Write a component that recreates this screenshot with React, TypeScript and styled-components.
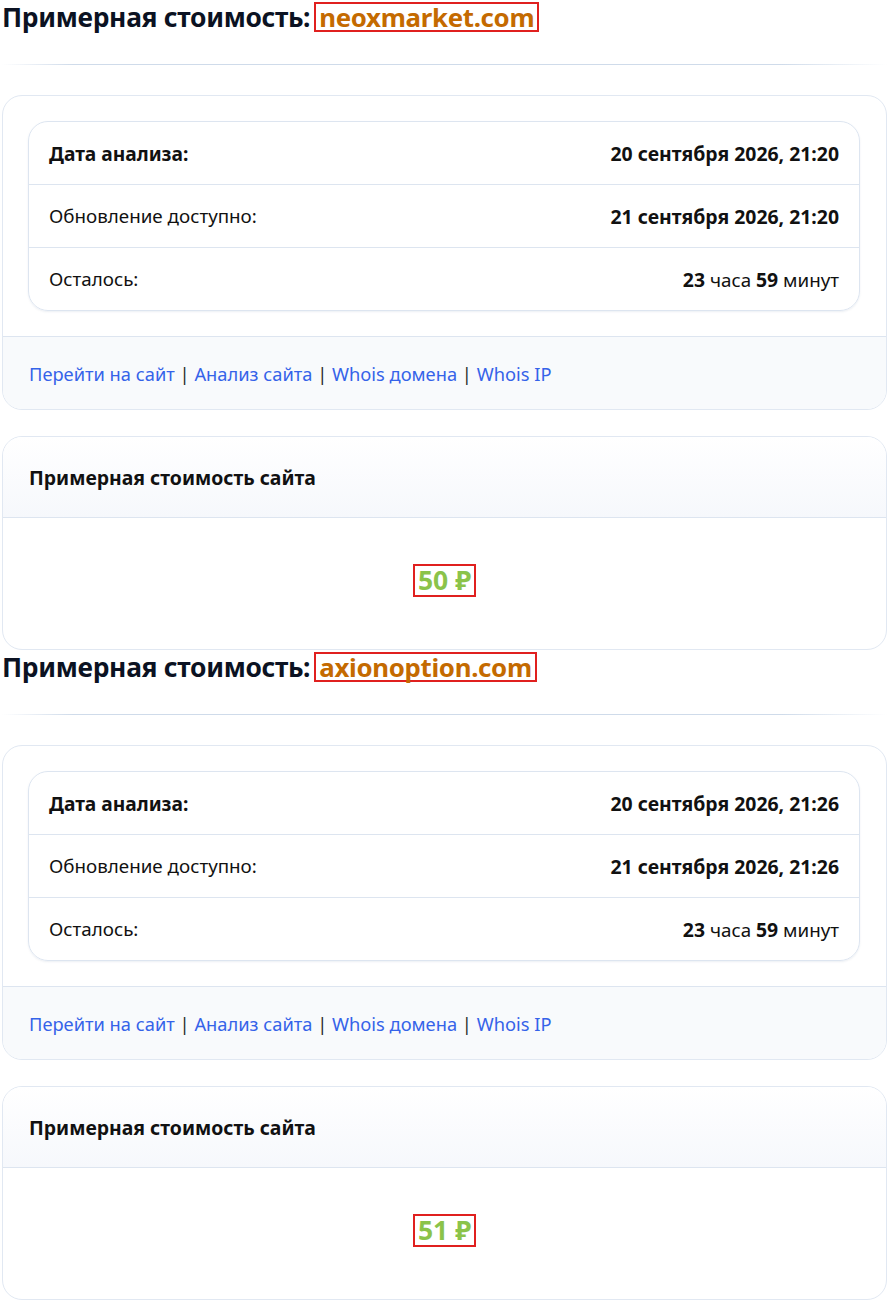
import React from "react";
import styled, { createGlobalStyle } from "styled-components";

const GlobalStyle = createGlobalStyle`
  html, body {
    margin: 0;
    padding: 0;
    background: #ffffff;
  }
  body {
    font-family: "Noto Sans", "Open Sans", "DejaVu Sans", sans-serif;
    color: #111111;
  }
`;

const Page = styled.div`
  width: 890px;
  display: flex;
  flex-direction: column;
`;

const Block = styled.section`
  padding: 0 3px 0 2px;
  display: flex;
  flex-direction: column;
`;

const Title = styled.h2`
  margin: 0;
  height: 33px;
  display: flex;
  align-items: center;
  gap: 4px;
  font-size: 26.4px;
  font-weight: 700;
  color: #0b1222;
  letter-spacing: -0.3px;
  white-space: nowrap;
`;

const Domain = styled.span`
  color: #c46a00;
  border: 2px solid #e0201f;
  padding: 0 3px;
  font-size: 25.8px;
  line-height: 26px;
`;

const Divider = styled.hr`
  margin: 31px 0 30px;
  height: 1px;
  border: 0;
  background: linear-gradient(90deg, rgba(203, 213, 230, 0) 0%, #cfdbea 8%, #cfdbea 88%, rgba(203, 213, 230, 0) 100%);
`;

const Card = styled.div<{ $gap?: number }>`
  border: 1px solid #e1e8f2;
  border-radius: 20px;
  overflow: hidden;
  background: #ffffff;
  margin-top: ${(p) => p.$gap ?? 0}px;
`;

const CardBody = styled.div`
  padding: 25px 26px 25px 25px;
`;

const Table = styled.div`
  border: 1px solid #dde5f0;
  border-radius: 20px;
  overflow: hidden;
  box-shadow: 0 1px 2px rgba(100, 120, 160, 0.12);
`;

const Row = styled.div`
  height: 62px;
  padding: 0 20px;
  display: flex;
  align-items: center;
  justify-content: space-between;
  font-size: 18.8px;
  color: #111111;
  white-space: nowrap;
  & + & {
    border-top: 1px solid #dde5f0;
  }
`;

const Label = styled.span<{ $bold?: boolean }>`
  font-weight: ${(p) => (p.$bold ? 700 : 400)};
  font-size: ${(p) => (p.$bold ? "19.2px" : "inherit")};
`;

const Value = styled.span`
  b {
    font-weight: 700;
    font-size: 19.4px;
  }
`;

const Footer = styled.div`
  border-top: 1px solid #dde5f0;
  background: #f8fafc;
  height: 72px;
  padding: 0 26px;
  display: flex;
  align-items: center;
  font-size: 18.3px;
  color: #1b1b1b;
  white-space: pre;
`;

const Link = styled.a`
  color: #3563e9;
  text-decoration: none;
`;

const Sep = styled.span`
  color: #2a2a2a;
`;

const CardHeader = styled.div`
  height: 80px;
  padding: 0 26px;
  display: flex;
  align-items: center;
  border-bottom: 1px solid #dde5f0;
  background: linear-gradient(180deg, #ffffff 0%, #f6f8fc 100%);
  font-size: 19.4px;
  font-weight: 700;
  color: #111111;
`;

const PriceBody = styled.div`
  height: 131px;
  display: flex;
  justify-content: center;
  padding-top: 46px;
  box-sizing: border-box;
`;

const Price = styled.span`
  align-self: flex-start;
  border: 2px solid #e0201f;
  padding: 0 3px;
  color: #8bc34a;
  font-size: 26.5px;
  font-weight: 700;
  line-height: 29px;
`;

type Item = {
  domain: string;
  analyzed: string;
  updated: string;
  price: string;
};

const items: Item[] = [
  {
    domain: "neoxmarket.com",
    analyzed: "20 сентября 2026, 21:20",
    updated: "21 сентября 2026, 21:20",
    price: "50 ₽",
  },
  {
    domain: "axionoption.com",
    analyzed: "20 сентября 2026, 21:26",
    updated: "21 сентября 2026, 21:26",
    price: "51 ₽",
  },
];

const Estimate = ({ item }: { item: Item }) => (
  <Block>
    <Title>
      Примерная стоимость: <Domain>{item.domain}</Domain>
    </Title>
    <Divider />
    <Card>
      <CardBody>
        <Table>
          <Row>
            <Label $bold>Дата анализа:</Label>
            <Value><b>{item.analyzed}</b></Value>
          </Row>
          <Row>
            <Label>Обновление доступно:</Label>
            <Value><b>{item.updated}</b></Value>
          </Row>
          <Row>
            <Label>Осталось:</Label>
            <Value><b>23</b> часа <b>59</b> минут</Value>
          </Row>
        </Table>
      </CardBody>
      <Footer>
        <Link href="#">Перейти на сайт</Link>
        <Sep> | </Sep>
        <Link href="#">Анализ сайта</Link>
        <Sep> | </Sep>
        <Link href="#">Whois домена</Link>
        <Sep> | </Sep>
        <Link href="#">Whois IP</Link>
      </Footer>
    </Card>
    <Card $gap={26}>
      <CardHeader>Примерная стоимость сайта</CardHeader>
      <PriceBody>
        <Price>{item.price}</Price>
      </PriceBody>
    </Card>
  </Block>
);

export default function App() {
  return (
    <Page>
      <GlobalStyle />
      {items.map((item) => (
        <Estimate key={item.domain} item={item} />
      ))}
    </Page>
  );
}
